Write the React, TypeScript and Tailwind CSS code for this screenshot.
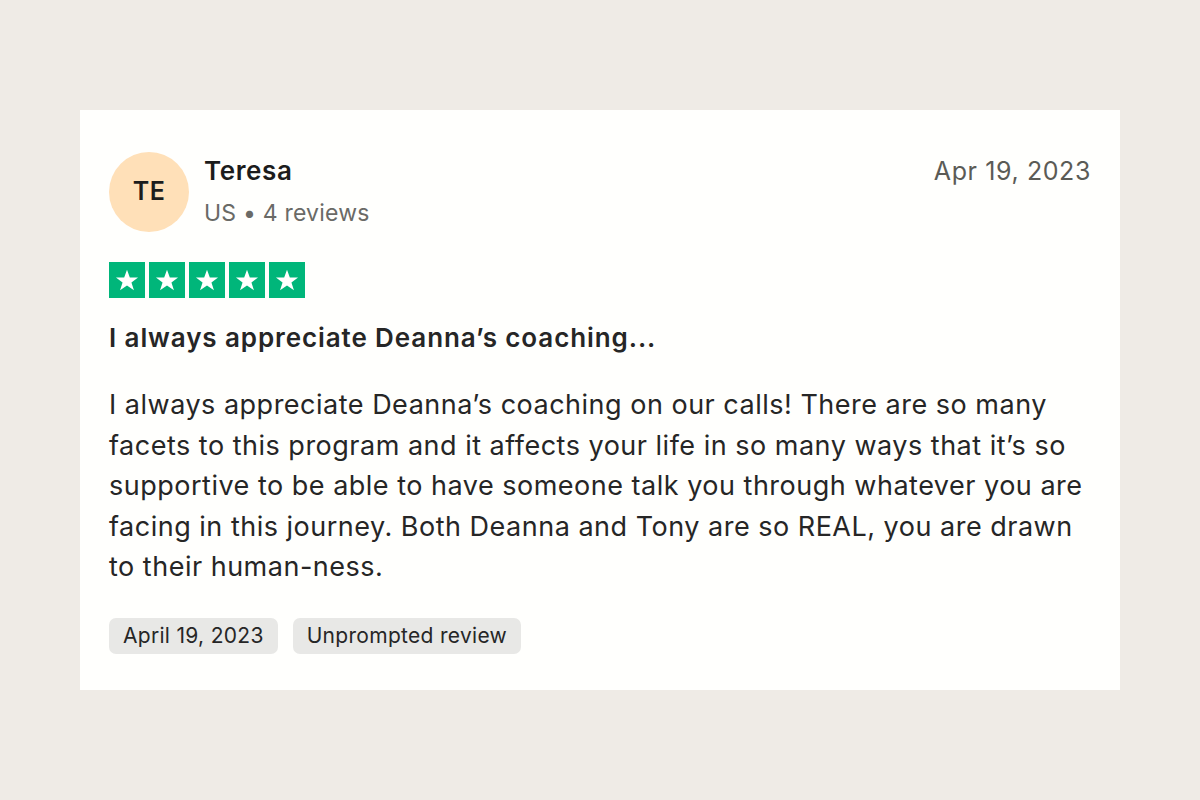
const body =
  "I always appreciate Deanna\u2019s coaching on our calls! There are so many facets to this program and it affects your life in so many ways that it\u2019s so supportive to be able to have someone talk you through whatever you are facing in this journey. Both Deanna and Tony are so REAL, you are drawn to their human-ness.";

function Stars() {
  return (
    <div className="flex gap-[4px]">
      {[0, 1, 2, 3, 4].map((i) => (
        <div key={i} className="w-[36px] h-[36px] bg-[#00b67a] flex items-center justify-center">
          <svg viewBox="0 0 24 24" className="w-[26px] h-[26px]">
            <path
              d="M12 2.5l2.6 7.2h7.6l-6.1 4.5 2.3 7.3L12 17l-6.4 4.5 2.3-7.3-6.1-4.5h7.6z"
              fill="#ffffff"
            />
          </svg>
        </div>
      ))}
    </div>
  );
}

export default function App() {
  return (
    <div
      className="w-[1200px] h-[800px] bg-[#efebe6] pt-[110px] px-[80px]"
      style={{ fontFamily: "Inter, 'Noto Sans', sans-serif" }}
    >
      <div className="bg-[#fffffd] h-[580px] pl-[29px] pr-[29px] pt-[42px]">
        <div className="flex items-start">
          <div className="w-[80px] h-[80px] rounded-full bg-[#ffe0b8] flex items-center justify-center text-[25px] font-semibold text-[#1c1c1c] tracking-[0.5px]">
            TE
          </div>
          <div className="ml-[15px] mt-[1px]">
            <div className="text-[26px] font-semibold text-[#1c1c1c] leading-[36px] tracking-[0.6px]">Teresa</div>
            <div className="text-[23px] text-[#6a6a66] leading-[36px] mt-[6px] tracking-[0.2px]">US &bull; 4 reviews</div>
          </div>
          <div className="ml-auto text-[25px] text-[#5b5b56] leading-[32px] mt-[3px] tracking-[0.6px]">Apr 19, 2023</div>
        </div>

        <div className="mt-[30px]">
          <Stars />
        </div>

        <div className="mt-[24px] text-[26px] font-semibold text-[#262626] leading-[32px] tracking-[0.9px]">
          I always appreciate Deanna&rsquo;s coaching...
        </div>

        <p className="mt-[31px] text-[27px] text-[#262626] leading-[40.5px] tracking-[0.5px]">{body}</p>

        <div className="mt-[30px] flex gap-[15px]">
          <span className="h-[36px] px-[14px] rounded-[7px] bg-[#e8e8e6] text-[21px] text-[#262626] flex items-center tracking-[0.3px]">
            April 19, 2023
          </span>
          <span className="h-[36px] px-[14px] rounded-[7px] bg-[#e8e8e6] text-[21px] text-[#262626] flex items-center tracking-[0.3px]">
            Unprompted review
          </span>
        </div>
      </div>
    </div>
  );
}
